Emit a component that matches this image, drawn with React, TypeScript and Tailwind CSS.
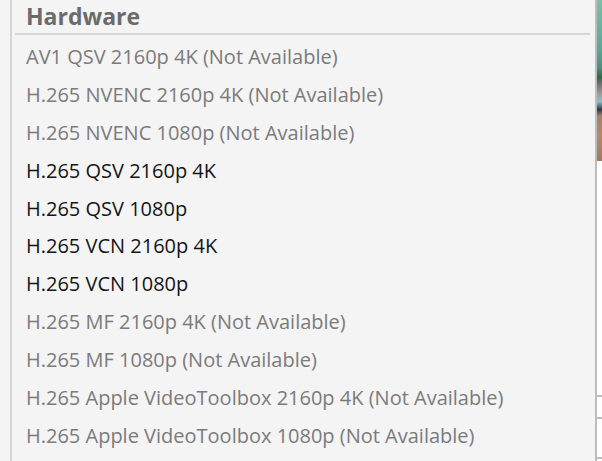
import React from 'react';

const items = [
  { label: 'AV1 QSV 2160p 4K (Not Available)', available: false },
  { label: 'H.265 NVENC 2160p 4K (Not Available)', available: false },
  { label: 'H.265 NVENC 1080p (Not Available)', available: false },
  { label: 'H.265 QSV 2160p 4K', available: true },
  { label: 'H.265 QSV 1080p', available: true },
  { label: 'H.265 VCN 2160p 4K', available: true },
  { label: 'H.265 VCN 1080p', available: true },
  { label: 'H.265 MF 2160p 4K (Not Available)', available: false },
  { label: 'H.265 MF 1080p (Not Available)', available: false },
  { label: 'H.265 Apple VideoToolbox 2160p 4K (Not Available)', available: false },
  { label: 'H.265 Apple VideoToolbox 1080p (Not Available)', available: false },
];

const App: React.FC = () => {
  return (
    <div className="flex h-[461px] w-[602px] overflow-hidden bg-[#f4f4f4] font-['Open_Sans',sans-serif]">
      {/* Left gutter */}
      <div className="w-[10px] shrink-0" />

      {/* Dropdown panel */}
      <div className="flex min-w-0 flex-1 flex-col border-l-2 border-[#d6d6d6] pl-[3px] pr-[5px]">
        <div className="flex h-[33px] items-center pl-[11px] text-[23px] font-bold text-[#6b6b6b]">
          Hardware
        </div>
        <div className="h-[2px] bg-[#d6d6d6]" />
        <ul className="mt-[3px]">
          {items.map((item) => (
            <li
              key={item.label}
              className={`flex h-[37.9px] items-center whitespace-nowrap pl-[11px] text-[20px] ${
                item.available ? 'text-[#141414]' : 'text-[#7b7b7b]'
              }`}
            >
              {item.label}
            </li>
          ))}
        </ul>
      </div>

      {/* Window border + background strip */}
      <div className="w-[2px] shrink-0 bg-[#bdbdbd]" />
      <div className="flex w-[5px] shrink-0 flex-col bg-white">
        <div className="h-[161px] bg-[linear-gradient(to_bottom,#7bbfa8_0%,#5aa89a_30%,#4f8f7c_42%,#2f6a3f_48%,#6d6f70_52%,#9a9a98_58%,#8cc0c8_63%,#2f3a44_68%,#a6826a_72%,#b08a70_85%,#9e7a62_100%)]" />
        <div className="flex-1" />
        <div className="h-[2px] bg-[#bdbdbd]" />
        <div className="h-[20px]" />
        <div className="h-[2px] bg-[#bdbdbd]" />
        <div className="h-[38px]" />
        <div className="h-[2px] bg-[#bdbdbd]" />
        <div className="h-[2px]" />
      </div>
    </div>
  );
};

export default App;
